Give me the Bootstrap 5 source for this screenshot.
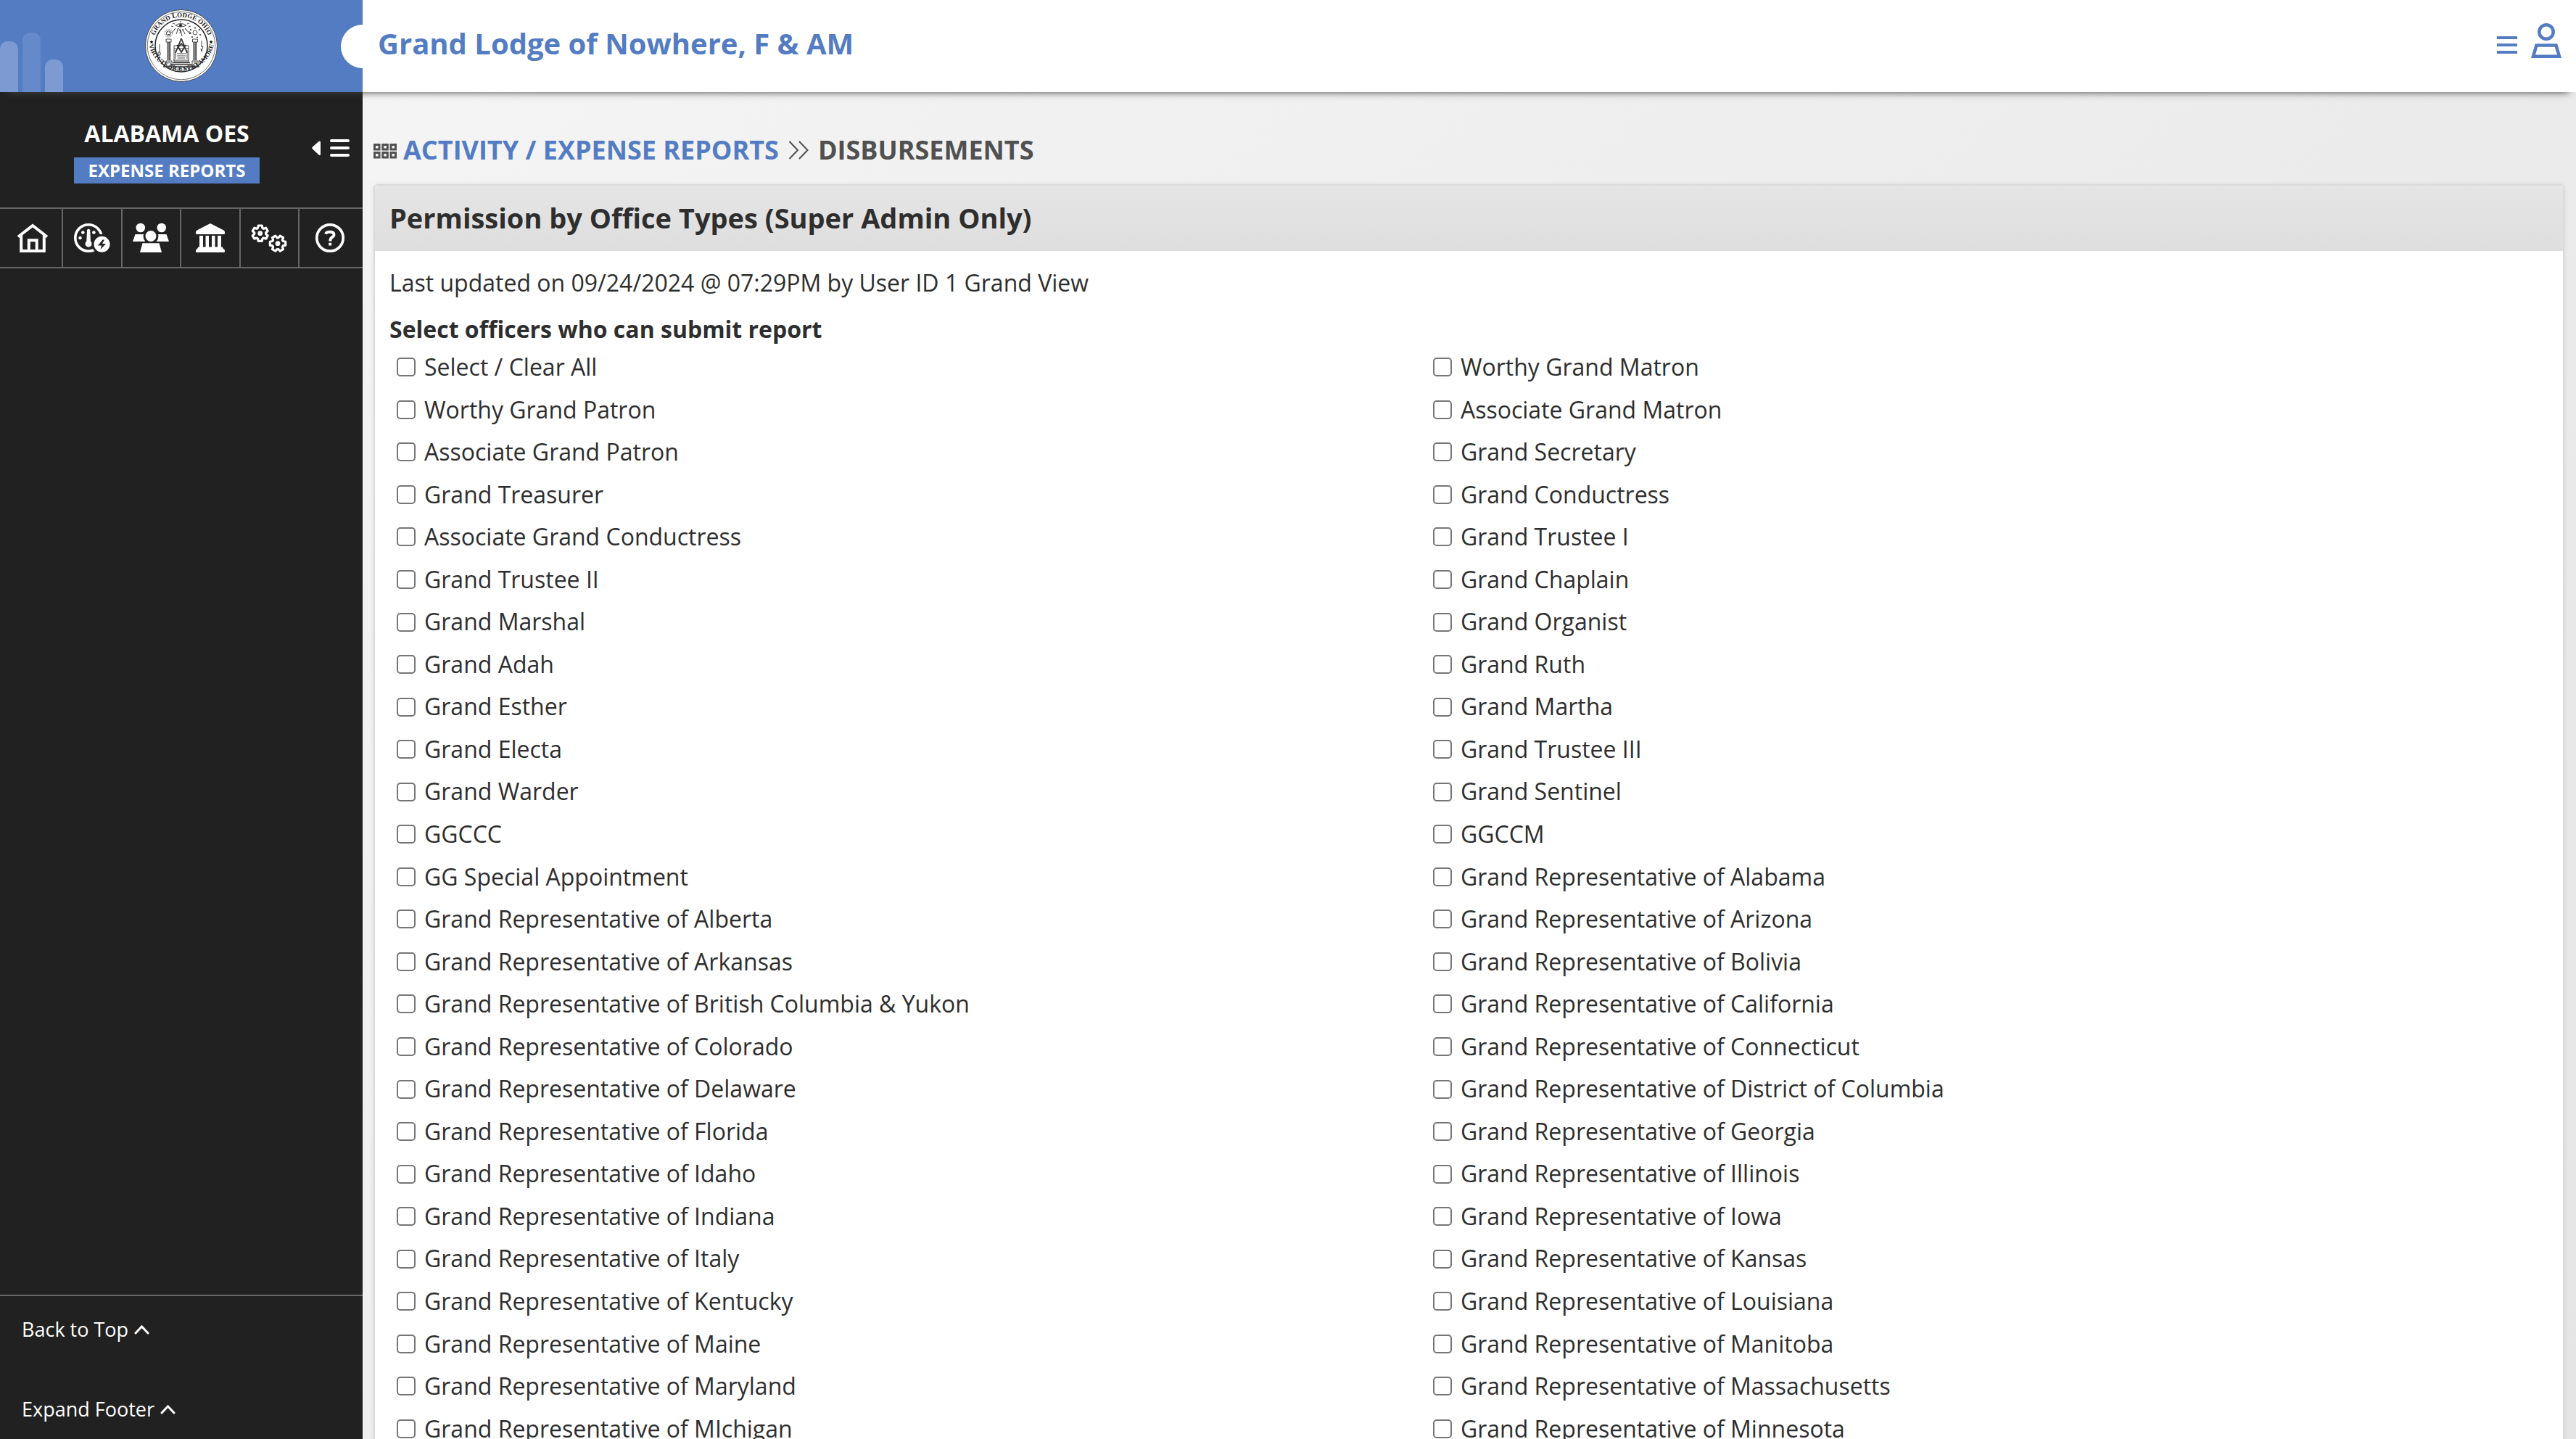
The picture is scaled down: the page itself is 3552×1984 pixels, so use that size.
<!DOCTYPE html>
<html lang="en">
<head>
<meta charset="utf-8">
<meta name="viewport" content="width=device-width, initial-scale=1">
<title>Permission by Office Types</title>
<link href="https://cdn.jsdelivr.net/npm/bootstrap@5.3.0/dist/css/bootstrap.min.css" rel="stylesheet">
<style>
:root { --brand: #537cc3; --side: #212121; --side-width: 500px; --rule: #666; }
body { font-family: "Open Sans", "Noto Sans", sans-serif; font-size: 32px; color: #2e2e2e; background: linear-gradient(135deg, #f6f6f6, #e5e5e5); }
svg { display: block; flex: none; }
.icon-btn { background: none; border: 0; padding: 0; color: inherit; }

.topbar { height: 127px; z-index: 10; box-shadow: 0 10px 10px -10px #444; }
.brand-panel { width: var(--side-width); background: var(--brand); overflow: hidden; }
.brand-bars { gap: 6px; bottom: 0; left: 0; }
.brand-bars span { width: 25px; border-radius: 10px 10px 0 0; background: #7e9ad3; }
.brand-bars .bar-mid { height: 70px; }
.brand-bars .bar-tall { height: 82px; background: #658acb; }
.brand-bars .bar-short { height: 45px; }
.brand-notch { width: 60px; height: 60px; right: -30px; top: 34px; background: #fff; border-radius: 50%; }
.lodge-title { font-size: 40px; line-height: 56px; }
.topbar-main { padding: 32px 20px 0 21px; color: var(--brand); }
.topbar-tools { gap: 19px; }

.sidebar { width: var(--side-width); background: var(--side); color: #fff; }
.org { height: 159px; padding: 34px 0 0 40px; }
.org-name { font-size: 32px; line-height: 46px; margin: 0 0 10px; }
.org-tag { font-size: 24px; line-height: 36px; padding: 0 20px; background: var(--brand); }
.org-toggle { width: 80px; padding-left: 10px; }
.quick-nav { display: grid; grid-template-columns: 87px repeat(4, 1fr) 87px; height: 84px; border: solid var(--rule); border-width: 2px 0; }
.quick-nav a { display: flex; align-items: center; justify-content: center; color: #fff; border-right: 2px solid var(--rule); }
.quick-nav a:first-child { padding-left: 4px; }
.quick-nav a:last-child { border-right: 0; padding-right: 4px; }
.side-foot { border-top: 2px solid var(--rule); padding: 28px 30px 23px; gap: 74px; font-size: 27px; line-height: 36px; }
.side-foot a { color: #fff; gap: 8px; }

.page { padding: 53px 16px 0 15px; overflow-y: auto; scrollbar-width: none; }
.page::-webkit-scrollbar { display: none; }
.crumbs { font-size: 36px; line-height: 54px; margin-bottom: 20px; gap: 9px; color: #505050; }
.crumbs a { color: var(--brand); }
.crumbs .sep { margin: 0 4px; }
.panel { border: 2px solid #dadada; border-radius: 6px; box-shadow: 0 0 6px rgba(0,0,0,.08); background: #fff; color: inherit; }
.panel-head { height: 90px; padding: 0 20px 2px; background: linear-gradient(#e5e5e5, #dedede); border: 0; }
.panel-head h1 { font-size: 38px; line-height: 52px; }
.panel-body { padding: 15px 20px 20px; }
.updated { line-height: 58px; margin-bottom: 12px; }
.group-title { font-size: 32px; line-height: 46px; font-weight: 700; }
.officers { display: grid; grid-template-columns: 48% 48%; line-height: 1.83; }
.officers label { display: flex; align-items: center; gap: 12px; padding-left: 10px; }
.officers .form-check-input { width: 26px; height: 26px; margin: 0; background-color: #fff; border: 2px solid #767676; border-radius: 5px; }
.officers .form-check-input:checked { background-color: var(--brand); }
</style>
</head>
<body>
<div class="vh-100 d-flex flex-column overflow-hidden">

  <header class="topbar d-flex flex-shrink-0 position-relative bg-white">
    <div class="brand-panel position-relative d-flex justify-content-center align-items-center flex-shrink-0">
      <div class="brand-bars position-absolute d-flex align-items-end"><span class="bar-mid"></span><span class="bar-tall"></span><span class="bar-short"></span></div>
      <svg width="102" height="102" viewBox="-51 -50 102 102" role="img" aria-label="Grand Lodge seal">
        <defs>
          <path id="arcTop" d="M-39.500 0A39.500 39.500 0 0 1 39.500 0"/>
          <path id="arcBottom" d="M-45.500 -6A45.800 45.800 0 0 0 45.500 -6"/>
          <path id="star" d="M0-2.800L.8-.9 2.700-.9 1.200.3 1.700 2.300 0 1.100-1.700 2.300-1.200.3-2.700-.9-.8-.9Z"/>
        </defs>
        <circle r="49.500" fill="#fff" stroke="#444" stroke-width="1"/>
        <circle r="46.800" fill="none" stroke="#333" stroke-width=".7"/>
        <circle r="36" fill="#fff" stroke="#222" stroke-width="1.500"/>
        <g font-family="Liberation Serif, serif" font-weight="700" fill="#222" text-anchor="middle">
          <text font-size="9"><textPath href="#arcTop" startOffset="50%"><tspan>GRAND</tspan>  <tspan font-size="10">L</tspan>ODGE  OHIO</textPath></text>
          <text font-size="9"><textPath href="#arcBottom" startOffset="50%">VIRTUTE SILENTIO AMORE</textPath></text>
        </g>
        <use href="#star" x="-41" y="-5"/><use href="#star" x="41" y="-5"/>
        <g fill="none" stroke="#333" stroke-width=".9">
          <path d="M-8-28Q-1-33 7-28Q-1-24-8-28Z"/><circle cx="-1" cy="-28" r="1.800" fill="#222"/>
          <path d="M-14-27l3 1M13-27l-3 1M-12-31l3 1M11-31l-3 1M-1-34v2M-10-22l2-2-4 5M-6-21l2-3-3 8M-2-20v-3M-2-17l1-5 2 9M2-20v-3l3 7M7-21l-2-3 7 8M-12-19l-3 2M10-20l4 3"/>
          <circle cx="-17.500" cy="-17" r="3.200"/><circle cx="-17.500" cy="-17" r="5.200" stroke-dasharray="1 1"/><path d="M-19-18h1M-17-18h1M-19-15.500h3"/>
          <circle cx="19" cy="-18" r="3"/>
          <path d="M-30-2V9m-2 0h3v4h-3zM28-7v8m-1 0h3l-2 7-1-4"/>
          <path d="M-19-5V20M-17-5V20M-15.500-5V20M17-5V20M19-5V20M20.500-5V20" stroke-width="1.200"/>
          <path d="M-21-9h7v4h-7zM15.500-9h7v4h-7zM-21 21h8v7h-8zM15 21h8v7h-8zM-19 23h4v4M17 23h4v4"/>
          <path d="M-10 0h20v22h-20zM-11 20h22M-10 4h20M-8 6v12M8 6v12M-6 11h12M-6 14h12M-5 17h10"/>
          <path d="M0-10L-8 10M0-10L8 10M-6-1L0 9 6-1M-5 3L0-3 5 3" stroke-width="1.700"/>
          <path d="M-12 23.500h24M-14 26h28M-25 29h50" stroke-width="1.500"/>
          <path d="M0 29v6M-4 29l-1 6M4 29l1 6M-8 29l-3 5M8 29l3 5M-12 29l-4 4M12 29l4 4M-16 29l-4 2M16 29l4 2"/>
        </g>
        <g fill="#222"><circle cx="13" cy="-22" r="1"/><circle cx="19" cy="-24.500" r="1"/><circle cx="25" cy="-22" r="1"/><circle cx="26" cy="-15" r="1"/><circle cx="22" cy="-11.500" r="1"/><circle cx="15" cy="-12" r="1"/><circle cx="12" cy="-17" r="1"/></g>
      </svg>
      <div class="brand-notch position-absolute"></div>
    </div>
    <div class="topbar-main d-flex flex-grow-1 justify-content-between align-items-start">
      <div class="lodge-title fw-bold">Grand Lodge of Nowhere, F &amp; AM</div>
      <div class="topbar-tools d-flex">
        <button class="icon-btn" type="button" aria-label="Menu"><svg width="28" height="48" viewBox="0 0 28 48" fill="currentColor"><path d="M0 18h28v4H0zM0 28h28v4H0zM0 38h28v4H0z"/></svg></button>
        <button class="icon-btn" type="button" aria-label="Account"><svg width="42" height="48" viewBox="0 0 42 48" fill="none" stroke="currentColor" stroke-width="4.500"><circle cx="21" cy="12" r="9.700"/><path d="M7.500 30.500h27l4.500 15.200H3Z"/></svg></button>
      </div>
    </div>
  </header>

  <div class="d-flex flex-grow-1 overflow-hidden">
    <aside class="sidebar d-flex flex-column flex-shrink-0">
      <div class="org d-flex align-items-start">
        <div class="flex-grow-1 d-flex flex-column align-items-center">
          <h2 class="org-name fw-bold">ALABAMA OES</h2>
          <div class="org-tag fw-bold">EXPENSE REPORTS</div>
        </div>
        <button class="icon-btn org-toggle align-self-start pt-4" type="button" aria-label="Collapse sidebar">
          <svg width="54" height="38" viewBox="0 0 54 38" fill="currentColor"><path d="M12 11.500V27.500Q12 30 9.500 28.500L1 20.500Q-.5 19 1 17.500L9.500 10Q12 8.500 12 11.500Z"/><path d="M27 9H50M27 19H50M27 29H50" stroke="currentColor" stroke-width="4" stroke-linecap="round"/></svg>
        </button>
      </div>
      <nav class="quick-nav" aria-label="Sections">
        <a href="#home" aria-label="Home"><svg width="50" height="42" viewBox="0 0 50 42" fill="none" stroke="#fff" stroke-width="4"><path d="M5 19.500 25 4l20 15.500M9.200 17v22h31.600V17M19.800 39V24.300h10.900V39"/></svg></a>
        <a href="#dashboard" aria-label="Dashboard"><svg width="50" height="42" viewBox="0 0 50 42" fill="#fff"><circle cx="20" cy="21" r="18.200" fill="none" stroke="#fff" stroke-width="3.600"/><path d="M18 10q2-3 4.300 0l.6 15.500a4.600 4.600 0 1 1-5.600 0Z"/><circle cx="12.300" cy="13.500" r="2.300"/><circle cx="27.400" cy="13.500" r="2.300"/><circle cx="8.500" cy="21" r="2.300"/><circle cx="38.500" cy="29.700" r="12.500" stroke="#212121" stroke-width="3"/><path d="M39.500 23.500l-6.500 8h5l-1.500 5.500 7.500-8h-5l3-5.500Z" fill="#212121"/></svg></a>
        <a href="#members" aria-label="Members"><svg width="50" height="42" viewBox="0 0 50 42" fill="#fff"><circle cx="10.800" cy="7" r="6.300"/><circle cx="39.800" cy="7" r="6.300"/><path d="M3.500 16H17v10H0ZM33 16h13.500L50 26H33Z"/><circle cx="25" cy="18.500" r="9" stroke="#212121" stroke-width="3"/><path d="M13.500 28.300h23L40 41H10Z"/></svg></a>
        <a href="#lodge" aria-label="Institution"><svg width="50" height="42" viewBox="0 0 50 42" fill="#fff"><path d="M25 1 43.500 10.500Q45 11.500 45 13v1.500Q45 16 43.500 16h-37Q5 16 5 14.500V13q0-1.500 1.500-2.500ZM10 18h5v16h-5zM18.500 18h4.500v16h-4.500zM27 18h4.500v16H27zM35 18h5v16h-5zM8.500 33.500h33l1.500 2.500q2 .5 2 2.500v1q0 1.500-1.500 1.500h-37Q5 41 5 39.500v-1Q5 36.500 7 36Z"/></svg></a>
        <a href="#settings" aria-label="Settings"><svg width="50" height="42" viewBox="0 0 50 42" fill="none" stroke="#fff" stroke-width="3.200" stroke-linejoin="round"><defs><path id="gear" d="M-3.200-7.300-2.500-10.700H2.500L3.200-7.300 4.700-6.400 8-7.500 10.500-3.200 7.900-.9V.9L10.500 3.200 8 7.500 4.700 6.400 3.200 7.300 2.500 10.700H-2.500L-3.200 7.300-4.700 6.400-8 7.500-10.500 3.200-7.900.9V-.9L-10.500-3.200-8-7.500-4.700-6.400Z"/></defs><use href="#gear" x="12.700" y="14.700"/><circle cx="12.700" cy="14.700" r="1.800"/><use href="#gear" transform="translate(37 28.700) rotate(30)"/><circle cx="37" cy="28.700" r="1.800"/></svg></a>
        <a href="#help" aria-label="Help"><svg width="50" height="42" viewBox="0 0 50 42" fill="none" stroke="#fff" stroke-width="3.700"><circle cx="25" cy="21" r="18.200"/><path d="M19 15.500Q20 12.800 25 12.800 30.500 12.800 30.500 16.500 30.500 18.700 28 20T25.200 25.500M25.200 27.800v3.700" stroke-width="3.900"/></svg></a>
      </nav>
      <div class="side-foot d-flex flex-column mt-auto">
        <a class="d-flex align-items-center text-decoration-none" href="#top">Back to Top <svg width="21" height="14" viewBox="0 0 21 14" fill="none" stroke="currentColor" stroke-width="3" stroke-linecap="round"><path d="M2 12l8.500-9 8.500 9"/></svg></a>
        <a class="d-flex align-items-center text-decoration-none" href="#footer">Expand Footer <svg width="21" height="14" viewBox="0 0 21 14" fill="none" stroke="currentColor" stroke-width="3" stroke-linecap="round"><path d="M2 12l8.500-9 8.500 9"/></svg></a>
      </div>
    </aside>

    <main class="page flex-grow-1">
      <nav class="crumbs d-flex align-items-center fw-bold" aria-label="Breadcrumb">
        <svg width="32" height="24" viewBox="0 0 32 24" fill="none" stroke="currentColor" stroke-width="3"><path d="M1.500 4.500h6.500v6.500H1.500zM12.800 4.500h6.500v6.500h-6.500zM24 4.500h6.500v6.500H24zM1.500 15.500h6.500V22H1.500zM12.800 15.500h6.500V22h-6.500zM24 15.500h6.500V22H24z"/></svg>
        <a class="text-decoration-none" href="#reports">ACTIVITY / EXPENSE REPORTS</a>
        <svg class="sep" width="28" height="26" viewBox="0 0 28 26" fill="none" stroke="currentColor" stroke-width="2"><path d="M1.500 1l11.500 12L1.500 25M15 1l11.500 12L15 25"/></svg>
        <span>DISBURSEMENTS</span>
      </nav>

      <section class="panel card">
        <div class="panel-head card-header d-flex align-items-center"><h1 class="fw-bold m-0">Permission by Office Types (Super Admin Only)</h1></div>
        <div class="panel-body">
          <p class="updated">Last updated on 09/24/2024 @ 07:29PM by User ID 1 Grand View</p>
          <fieldset>
            <legend class="group-title m-0">Select officers who can submit report</legend>
            <div class="officers" id="officers"></div>
          </fieldset>
        </div>
      </section>
    </main>
  </div>
</div>
<script src="https://cdn.jsdelivr.net/npm/bootstrap@5.3.0/dist/js/bootstrap.bundle.min.js"></script>
<script>
const offices = ["Select / Clear All", "Worthy Grand Matron", "Worthy Grand Patron", "Associate Grand Matron", "Associate Grand Patron", "Grand Secretary", "Grand Treasurer", "Grand Conductress", "Associate Grand Conductress", "Grand Trustee I", "Grand Trustee II", "Grand Chaplain", "Grand Marshal", "Grand Organist", "Grand Adah", "Grand Ruth", "Grand Esther", "Grand Martha", "Grand Electa", "Grand Trustee III", "Grand Warder", "Grand Sentinel", "GGCCC", "GGCCM", "GG Special Appointment"];
const places = ["Alabama", "Alberta", "Arizona", "Arkansas", "Bolivia", "British Columbia & Yukon", "California", "Colorado", "Connecticut", "Delaware", "District of Columbia", "Florida", "Georgia", "Idaho", "Illinois", "Indiana", "Iowa", "Italy", "Kansas", "Kentucky", "Louisiana", "Maine", "Manitoba", "Maryland", "Massachusetts", "MIchigan", "Minnesota"];
const list = document.getElementById("officers");
offices.concat(places.map(p => "Grand Representative of " + p)).forEach((name, i) => {
  const label = document.createElement("label");
  const box = document.createElement("input");
  box.type = "checkbox";
  box.className = "form-check-input flex-shrink-0";
  box.id = "office" + i;
  label.htmlFor = box.id;
  label.append(box, name);
  list.append(label);
});
list.querySelector("input").addEventListener("change", e => {
  list.querySelectorAll("input").forEach(box => { box.checked = e.target.checked; });
});
</script>
</body>
</html>
